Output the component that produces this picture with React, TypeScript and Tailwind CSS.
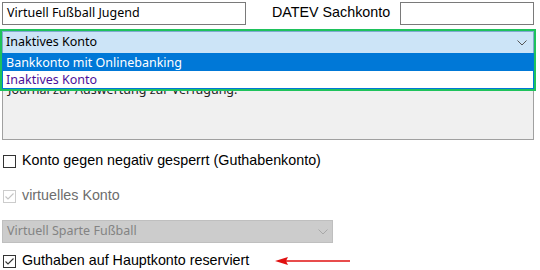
import React from "react";

function Check({ checked, disabled }: { checked?: boolean; disabled?: boolean }) {
  return (
    <div
      className={`w-[13px] h-[13px] border flex items-center justify-center bg-white shrink-0 ${
        disabled ? "border-[#cccccc]" : "border-[#333333]"
      }`}
    >
      {checked && (
        <svg width="11" height="11" viewBox="0 0 11 11">
          <path
            d="M1.5 5.5 L4 8 L9.5 2.5"
            fill="none"
            stroke={disabled ? "#c4c4c4" : "#333333"}
            strokeWidth="1.1"
          />
        </svg>
      )}
    </div>
  );
}

function Chevron({ color }: { color: string }) {
  return (
    <svg width="10" height="6" viewBox="0 0 10 6">
      <path d="M0.5 0.5 L5 5 L9.5 0.5" fill="none" stroke={color} strokeWidth="1" />
    </svg>
  );
}

export default function App() {
  const seg = { fontFamily: '"Noto Sans", "Open Sans", sans-serif' };
  const ari = { fontFamily: '"Liberation Sans", Arial, sans-serif' };
  return (
    <div className="w-[540px] h-[270px] bg-white relative overflow-hidden text-[#000]">
      {/* Row 1 */}
      <div className="flex items-center pt-[2px] h-[24px]">
        <div
          className="ml-[2px] w-[244px] h-[23px] border border-[#7a7a7a] flex items-center pl-[4px] text-[12.5px]"
          style={seg}
        >
          Virtuell Fußball Jugend
        </div>
        <div className="ml-[26px] w-[128px] text-[14.3px]" style={ari}>
          DATEV Sachkonto
        </div>
        <div className="w-[134px] h-[23px] border border-[#7a7a7a]" />
      </div>

      {/* Combo */}
      <div
        className="mt-[7px] ml-[2px] w-[532px] h-[23px] bg-[#cce4f7] border border-[#7fa9cf] flex items-center justify-between pl-[3px] pr-[6px] text-[12.5px]"
        style={seg}
      >
        <span>Inaktives Konto</span>
        <Chevron color="#555555" />
      </div>

      {/* Textarea behind */}
      <div
        className="mt-[3px] ml-[2px] w-[532px] h-[83px] bg-[#f0f0f0] border border-[#a0a0a0] pt-[24px] pl-[5px] text-[12.5px] leading-[16px] text-[#222]"
        style={seg}
      >
        <div>Journal zur Auswertung zur Verfügung.</div>
      </div>

      {/* Checkbox rows */}
      <div className="mt-[14px] ml-[3px] flex items-center gap-[6px] h-[14px] text-[14.3px]" style={ari}>
        <Check />
        <span>Konto gegen negativ gesperrt (Guthabenkonto)</span>
      </div>
      <div className="mt-[21px] ml-[3px] flex items-center gap-[6px] h-[14px] text-[14.3px]" style={ari}>
        <Check checked disabled />
        <span className="text-[#6d6d6d]">virtuelles Konto</span>
      </div>
      <div
        className="mt-[17px] ml-[2px] w-[331px] h-[23px] bg-[#cccccc] border border-[#bfbfbf] flex items-center justify-between pl-[4px] pr-[4px] text-[12.5px] text-[#838383]"
        style={seg}
      >
        <span>Virtuell Sparte Fußball</span>
        <Chevron color="#a8a8a8" />
      </div>
      <div className="mt-[11px] ml-[3px] flex items-center gap-[6px] h-[14px] text-[14.3px]" style={ari}>
        <Check checked />
        <span>Guthaben auf Hauptkonto reserviert</span>
        <svg className="ml-[20px]" width="76" height="10" viewBox="0 0 76 10">
          <path d="M10 5 L75 5" stroke="#e01010" strokeWidth="1.6" />
          <path d="M0 5 L13 1 L11 5 L13 9 Z" fill="#e01010" />
        </svg>
      </div>

      {/* Dropdown list overlay */}
      <div
        className="absolute left-[2px] top-[53px] w-[532px] h-[36px] bg-white border border-[#0078d7] text-[12.5px]"
        style={seg}
      >
        <div className="h-[17px] bg-[#0078d7] text-white pl-[3px] leading-[17px]">Bankkonto mit Onlinebanking</div>
        <div className="h-[17px] text-[#4b0e9a] pl-[3px] leading-[17px]">Inaktives Konto</div>
      </div>

      {/* Green highlight */}
      <div className="absolute left-[0px] top-[29px] w-[536px] h-[62px] border-2 border-[#1ec25c] pointer-events-none" />
    </div>
  );
}
